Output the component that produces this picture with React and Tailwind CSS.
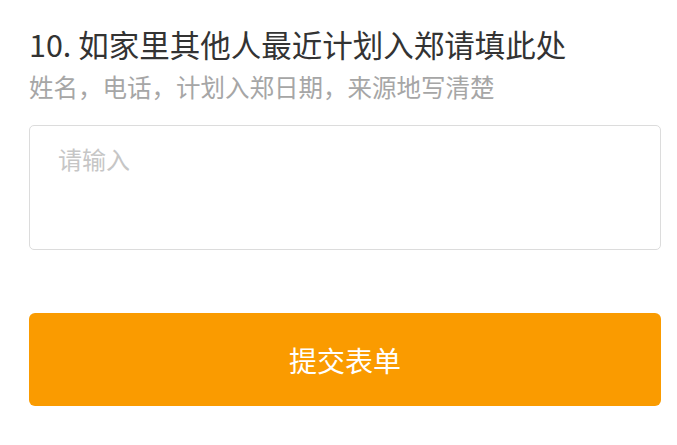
export default function App() {
  return (
    <div
      className="w-[677px] h-[445px] bg-white pl-[29px] pr-[16px] pt-[25px]"
      style={{ fontFamily: '"Noto Sans CJK SC", "Noto Sans", sans-serif' }}
    >
      <h2 className="text-[30.5px] leading-[38px] text-[#333333]">10. 如家里其他人最近计划入郑请填此处</h2>
      <p className="mt-[9px] text-[24.5px] leading-[30px] text-[#a6a6a6]">姓名，电话，计划入郑日期，来源地写清楚</p>
      <textarea
        placeholder="请输入"
        className="mt-[23px] block w-full h-[125px] resize-none rounded-[5px] border border-[#dcdcdc] px-[28px] py-[16px] text-[24px] leading-[34px] text-[#333333] placeholder:text-[#c6c6c6] outline-none"
      />
      <button className="mt-[63px] w-full h-[93px] rounded-[6px] bg-[#fa9b00] text-white text-[28px]">
        提交表单
      </button>
    </div>
  );
}
